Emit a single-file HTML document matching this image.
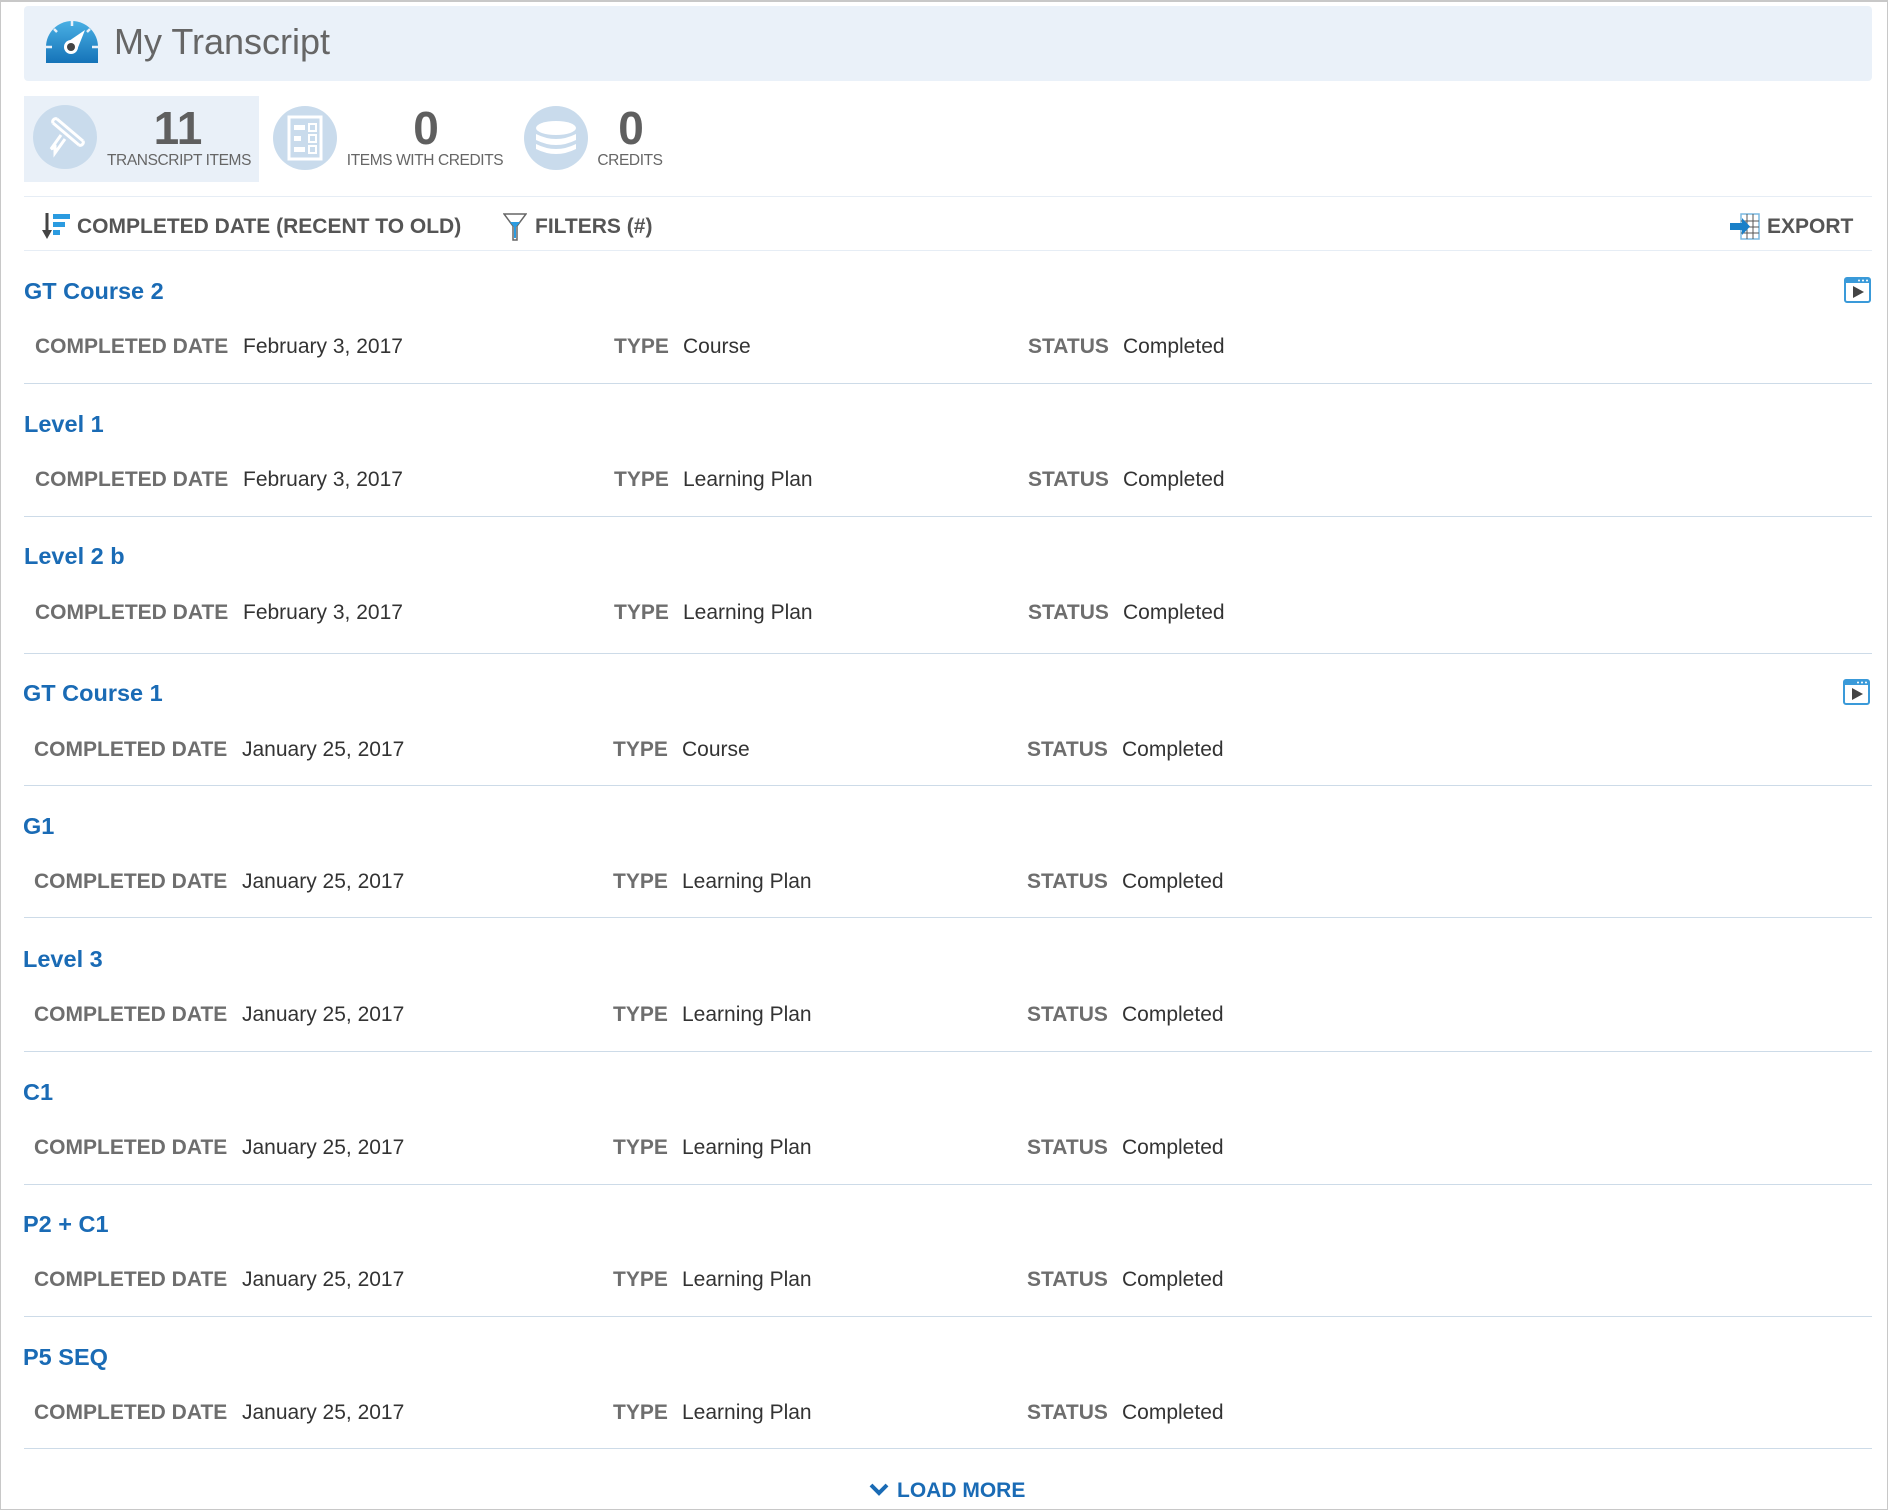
<!DOCTYPE html>
<html><head><meta charset="utf-8"><style>
*{margin:0;padding:0;box-sizing:border-box}
body{width:1888px;height:1510px;background:#fff;font-family:"Liberation Sans",Arial,sans-serif;position:relative;overflow:hidden}
.frame{position:absolute;left:0;top:0;width:1888px;height:1510px;border:1px solid #c8c8c8;border-top:2px solid #c8c8c8}
.a{position:absolute;white-space:nowrap}
.hdr{left:24px;top:6px;width:1848px;height:75px;background:#eaf1f9;border-radius:4px}
.title{left:114px;top:20px;font-size:36px;color:#666;line-height:44px}
.stat{background:#e9f0f8;left:24px;top:96px;width:235px;height:86px}
.circ{width:64px;height:64px;border-radius:50%;background:#c9dbec}
.num{font-size:46px;font-weight:bold;color:#5f5f5f;line-height:46px;text-align:center}
.lbl{font-size:15.5px;color:#666;line-height:16px;letter-spacing:-0.4px;text-align:center}
.hl{left:24px;width:1848px;height:1px;background:#e6edf5}
.sort{font-size:21px;font-weight:bold;color:#555;line-height:26px;top:214px}
.rt{left:24px;font-size:23.5px;font-weight:bold;color:#1a6bb5;line-height:30px}
.k{font-size:21px;font-weight:bold;color:#6e6e6e;line-height:26px;margin-top:2px}
.v{font-size:21px;color:#333;line-height:26px;margin-top:2px}
.rt{margin-top:1px}
.dv{left:24px;width:1848px;height:1px;background:#cddbe8}
</style></head><body>
<div class="frame"></div>
<div class="a hdr"></div>
<svg class="a" style="left:44px;top:17px" width="56" height="48" viewBox="0 0 56 48">
<defs><linearGradient id="g" x1="0" y1="0" x2="0" y2="1"><stop offset="0" stop-color="#4ab0e4"/><stop offset="1" stop-color="#1573b8"/></linearGradient></defs>
<path d="M2 46 L2 30 A26 26 0 0 1 54 30 L54 46 Z" fill="url(#g)"/>
<g stroke="#eaf1f9" stroke-width="2.5"><line x1="28" y1="4" x2="28" y2="9"/><line x1="10" y1="12" x2="13" y2="15"/><line x1="46" y1="12" x2="43" y2="15"/><line x1="2" y1="30" x2="8" y2="30"/><line x1="48" y1="30" x2="54" y2="30"/></g>
<path d="M22 26 L41 13 L33 33 Z" fill="#fff"/>
<circle cx="27" cy="30" r="7" fill="#fff"/><circle cx="27" cy="30" r="4" fill="#444"/>
</svg>
<div class="a title">My Transcript</div>

<div class="a stat"></div>
<div class="a circ" style="left:33px;top:105px"></div>
<svg class="a" style="left:43px;top:115px" width="44" height="44" viewBox="0 0 44 44"><g fill="none" stroke="#fff" stroke-width="3"><path d="M10 8 L36 30 M14 4 L40 26 M10 8 A3 3 0 0 1 14 4 M36 30 A3 3 0 0 0 40 26"/><path d="M18 20 L8 34 L12 32 L12 38 L22 24"/></g></svg>
<div class="a num" style="left:128px;top:105px;width:100px">11</div>
<div class="a lbl" style="left:104px;top:153px;width:150px">TRANSCRIPT ITEMS</div>

<div class="a circ" style="left:273px;top:106px"></div>
<svg class="a" style="left:285px;top:114px" width="40" height="48" viewBox="0 0 40 48"><g fill="none" stroke="#fff" stroke-width="3"><rect x="4" y="3" width="32" height="42"/></g><g fill="#fff"><rect x="9" y="11" width="11" height="5"/><rect x="9" y="22" width="7" height="5"/><rect x="9" y="33" width="11" height="5"/></g><g fill="none" stroke="#fff" stroke-width="2"><rect x="24" y="10" width="7" height="7"/><rect x="24" y="21" width="7" height="7"/><rect x="24" y="32" width="7" height="7"/></g></svg>
<div class="a num" style="left:376px;top:105px;width:100px">0</div>
<div class="a lbl" style="left:340px;top:153px;width:170px">ITEMS WITH CREDITS</div>

<div class="a circ" style="left:524px;top:106px"></div>
<svg class="a" style="left:532px;top:120px" width="48" height="38" viewBox="0 0 48 38"><g fill="#fff"><ellipse cx="24" cy="8" rx="20" ry="7"/><path d="M4 14 Q24 24 44 14 L44 20 Q24 30 4 20Z"/><path d="M4 24 Q24 34 44 24 L44 29 Q24 39 4 29Z"/></g></svg>
<div class="a num" style="left:581px;top:105px;width:100px">0</div>
<div class="a lbl" style="left:590px;top:153px;width:80px">CREDITS</div>

<div class="a hl" style="top:196px"></div>
<svg class="a" style="left:42px;top:213px" width="30" height="27" viewBox="0 0 30 27"><path d="M5 0 L5 20" stroke="#444" stroke-width="3"/><path d="M0 17 L5 26 L10 17Z" fill="#444"/><g fill="#2b9be0"><rect x="11" y="1" width="17" height="5"/><rect x="11" y="9" width="12" height="5"/><rect x="11" y="17" width="7" height="5"/></g></svg>
<div class="a sort" style="left:77px">COMPLETED DATE (RECENT TO OLD)</div>
<svg class="a" style="left:503px;top:213px" width="24" height="28" viewBox="0 0 24 28"><path d="M1 1 L23 1 L14 13 L14 27 L10 27 L10 13 Z" fill="#fff" stroke="#666" stroke-width="1.5"/><path d="M7 9 L17 9 L13 14 L13 25 L11 25 L11 14Z" fill="#2b9be0"/></svg>
<div class="a sort" style="left:535px">FILTERS (#)</div>
<svg class="a" style="left:1730px;top:213px" width="30" height="27" viewBox="0 0 30 27"><rect x="11" y="1" width="18" height="25" fill="#fff" stroke="#7ab8e0" stroke-width="1.5"/><g stroke="#555" stroke-width="1"><line x1="17" y1="1" x2="17" y2="26"/><line x1="23" y1="1" x2="23" y2="26"/><line x1="11" y1="8" x2="29" y2="8"/><line x1="11" y1="14" x2="29" y2="14"/><line x1="11" y1="20" x2="29" y2="20"/></g><path d="M0 10 L12 10 L12 5 L20 13.5 L12 22 L12 17 L0 17Z" fill="#1a80c8"/></svg>
<div class="a sort" style="left:1767px">EXPORT</div>
<div class="a hl" style="top:250px"></div>

<div class="a rt" style="top:275px">GT Course 2</div>
<svg class="a" style="left:1844px;top:277px" width="27" height="26" viewBox="0 0 27 26"><rect x="1" y="1" width="25" height="24" rx="2" fill="#fff" stroke="#3a9ad9" stroke-width="2"/><rect x="1" y="1" width="25" height="5" fill="#3a9ad9"/><g fill="#fff"><circle cx="15" cy="3.5" r="1"/><circle cx="19" cy="3.5" r="1"/><circle cx="23" cy="3.5" r="1"/></g><path d="M9 9 L20 15 L9 21Z" fill="#444"/></svg>
<div class="a k" style="left:35px;top:332px">COMPLETED DATE</div><div class="a v" style="left:243px;top:332px">February 3, 2017</div>
<div class="a k" style="left:614px;top:332px">TYPE</div><div class="a v" style="left:683px;top:332px">Course</div>
<div class="a k" style="left:1028px;top:332px">STATUS</div><div class="a v" style="left:1123px;top:332px">Completed</div>
<div class="a dv" style="top:383px"></div>

<div class="a rt" style="top:408px">Level 1</div>
<div class="a k" style="left:35px;top:465px">COMPLETED DATE</div><div class="a v" style="left:243px;top:465px">February 3, 2017</div>
<div class="a k" style="left:614px;top:465px">TYPE</div><div class="a v" style="left:683px;top:465px">Learning Plan</div>
<div class="a k" style="left:1028px;top:465px">STATUS</div><div class="a v" style="left:1123px;top:465px">Completed</div>
<div class="a dv" style="top:516px"></div>

<div class="a rt" style="top:540px">Level 2 b</div>
<div class="a k" style="left:35px;top:598px">COMPLETED DATE</div><div class="a v" style="left:243px;top:598px">February 3, 2017</div>
<div class="a k" style="left:614px;top:598px">TYPE</div><div class="a v" style="left:683px;top:598px">Learning Plan</div>
<div class="a k" style="left:1028px;top:598px">STATUS</div><div class="a v" style="left:1123px;top:598px">Completed</div>
<div class="a dv" style="top:653px"></div>

<div class="a rt" style="top:677px;left:23px">GT Course 1</div>
<svg class="a" style="left:1843px;top:679px" width="27" height="26" viewBox="0 0 27 26"><rect x="1" y="1" width="25" height="24" rx="2" fill="#fff" stroke="#3a9ad9" stroke-width="2"/><rect x="1" y="1" width="25" height="5" fill="#3a9ad9"/><g fill="#fff"><circle cx="15" cy="3.5" r="1"/><circle cx="19" cy="3.5" r="1"/><circle cx="23" cy="3.5" r="1"/></g><path d="M9 9 L20 15 L9 21Z" fill="#444"/></svg>
<div class="a k" style="left:34px;top:735px">COMPLETED DATE</div><div class="a v" style="left:242px;top:735px">January 25, 2017</div>
<div class="a k" style="left:613px;top:735px">TYPE</div><div class="a v" style="left:682px;top:735px">Course</div>
<div class="a k" style="left:1027px;top:735px">STATUS</div><div class="a v" style="left:1122px;top:735px">Completed</div>
<div class="a dv" style="top:785px"></div>

<div class="a rt" style="top:810px;left:23px">G1</div>
<div class="a k" style="left:34px;top:867px">COMPLETED DATE</div><div class="a v" style="left:242px;top:867px">January 25, 2017</div>
<div class="a k" style="left:613px;top:867px">TYPE</div><div class="a v" style="left:682px;top:867px">Learning Plan</div>
<div class="a k" style="left:1027px;top:867px">STATUS</div><div class="a v" style="left:1122px;top:867px">Completed</div>
<div class="a dv" style="top:917px"></div>

<div class="a rt" style="top:943px;left:23px">Level 3</div>
<div class="a k" style="left:34px;top:1000px">COMPLETED DATE</div><div class="a v" style="left:242px;top:1000px">January 25, 2017</div>
<div class="a k" style="left:613px;top:1000px">TYPE</div><div class="a v" style="left:682px;top:1000px">Learning Plan</div>
<div class="a k" style="left:1027px;top:1000px">STATUS</div><div class="a v" style="left:1122px;top:1000px">Completed</div>
<div class="a dv" style="top:1051px"></div>

<div class="a rt" style="top:1076px;left:23px">C1</div>
<div class="a k" style="left:34px;top:1133px">COMPLETED DATE</div><div class="a v" style="left:242px;top:1133px">January 25, 2017</div>
<div class="a k" style="left:613px;top:1133px">TYPE</div><div class="a v" style="left:682px;top:1133px">Learning Plan</div>
<div class="a k" style="left:1027px;top:1133px">STATUS</div><div class="a v" style="left:1122px;top:1133px">Completed</div>
<div class="a dv" style="top:1184px"></div>

<div class="a rt" style="top:1208px;left:23px">P2 + C1</div>
<div class="a k" style="left:34px;top:1265px">COMPLETED DATE</div><div class="a v" style="left:242px;top:1265px">January 25, 2017</div>
<div class="a k" style="left:613px;top:1265px">TYPE</div><div class="a v" style="left:682px;top:1265px">Learning Plan</div>
<div class="a k" style="left:1027px;top:1265px">STATUS</div><div class="a v" style="left:1122px;top:1265px">Completed</div>
<div class="a dv" style="top:1316px"></div>

<div class="a rt" style="top:1341px;left:23px">P5 SEQ</div>
<div class="a k" style="left:34px;top:1398px">COMPLETED DATE</div><div class="a v" style="left:242px;top:1398px">January 25, 2017</div>
<div class="a k" style="left:613px;top:1398px">TYPE</div><div class="a v" style="left:682px;top:1398px">Learning Plan</div>
<div class="a k" style="left:1027px;top:1398px">STATUS</div><div class="a v" style="left:1122px;top:1398px">Completed</div>
<div class="a dv" style="top:1448px"></div>

<svg class="a" style="left:869px;top:1483px" width="20" height="14" viewBox="0 0 20 14"><path d="M2 2 L10 10 L18 2" fill="none" stroke="#1a6bb5" stroke-width="4"/></svg>
<div class="a" style="left:897px;top:1478px;font-size:21px;font-weight:bold;color:#1a6bb5;line-height:26px">LOAD MORE</div>
</body></html>
